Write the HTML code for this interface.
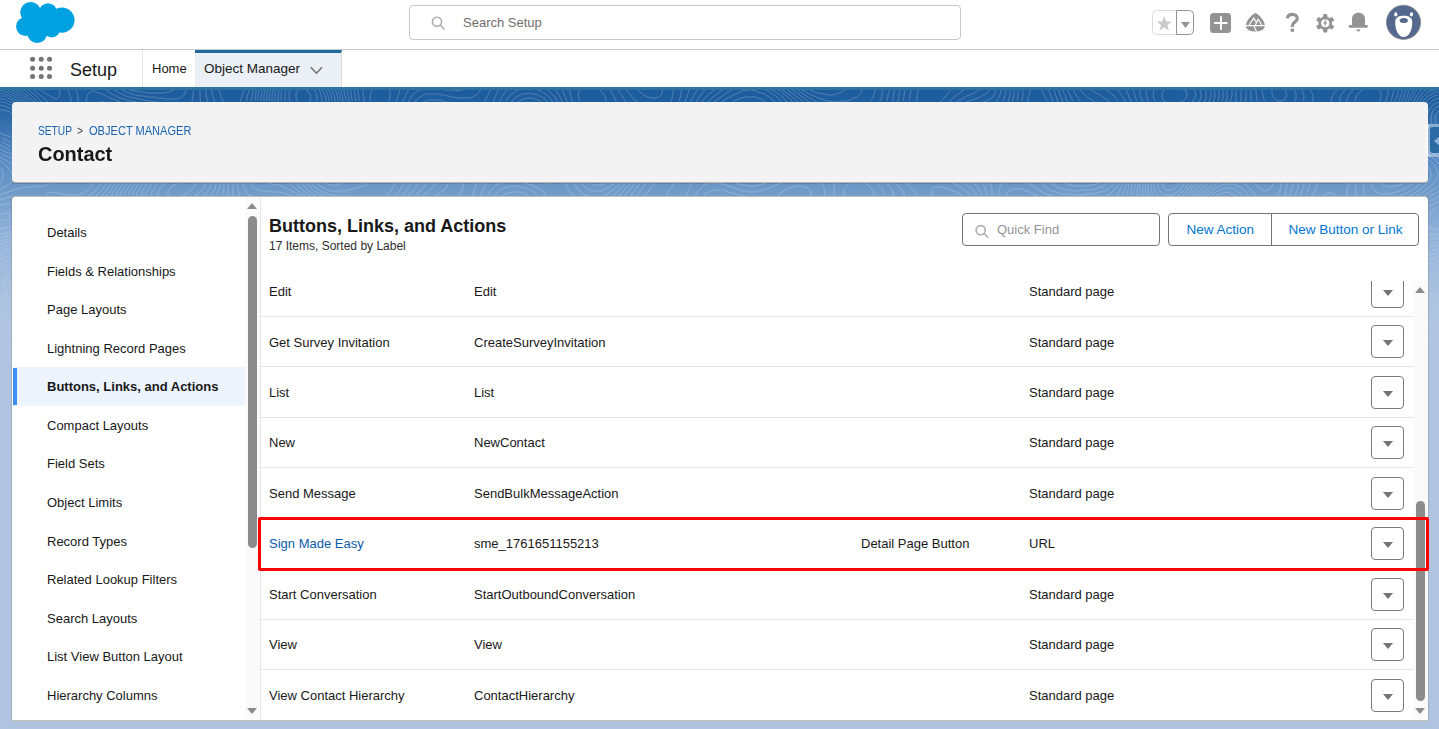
<!DOCTYPE html><html><head><meta charset='utf-8'><style>
*{box-sizing:border-box;margin:0;padding:0}
html,body{width:1439px;height:729px;overflow:hidden;font-family:"Liberation Sans",sans-serif;color:#181818;background:#b0c4df}
.t{position:absolute;line-height:1;white-space:nowrap}
.a{position:absolute}
#hdr{position:absolute;left:0;top:0;width:1439px;height:50px;background:#fff;border-bottom:1px solid #c9c9c9}
#nav{position:absolute;left:0;top:50px;width:1439px;height:37px;background:#fff}
#band{position:absolute;left:0;top:87px;width:1439px;height:642px;background:linear-gradient(#2d74a0 0px,#2d74a0 3px,#1c5c9e 3px,#1f5fa0 15px,#5a8bc3 73px,#6e9ac8 102px,#8fb0d8 143px,#adc3e0 213px,#b0c4df 240px)}
#hcard{position:absolute;left:12px;top:102px;width:1416px;height:81px;background:#f3f3f3;border-radius:4px;border-bottom:1px solid #bcb5af;box-shadow:0 1px 1px rgba(0,0,0,.15)}
#mcard{position:absolute;left:12px;top:196px;width:1416px;height:525px;background:#fff;border-radius:4px 4px 0 0;border-top:1px solid #c4bdb6;border-bottom:1px solid #c4bdb6;box-shadow:-0.5px 0 0 rgba(110,100,90,.45),0.5px 0 0 rgba(110,100,90,.45)}
.sep{position:absolute;left:261px;width:1152px;height:1px;background:#e5e5e5}
.dd{position:absolute;left:1371px;width:33px;height:33px;border:1px solid #7a7a7a;border-radius:4px;background:#fff}
.dd:after{content:"";position:absolute;left:10.5px;top:14px;border-left:5.2px solid transparent;border-right:5.2px solid transparent;border-top:6px solid #747474}
</style></head><body><div id="hdr"></div><div id="nav"></div><div id="band"></div>
<svg class="a" style="left:0;top:90px;-webkit-mask-image:linear-gradient(#000 0px,#000 107px,rgba(0,0,0,.6) 177px,transparent 297px)" width="1439" height="639" viewBox="0 90 1439 639"><path fill="none" stroke="rgba(255,255,255,0.22)" stroke-width="1" d="M1174,189 1176,187 1178,185 1179,183M1163,181 1163,185 1164,188 1166,190 1170,190 1174,189M308,103 310,101 311,97 310,94 308,91 306,90 304,89 300,89 298,90 296,93 296,95 296,98 297,101 299,103M1172,195 1174,194 1176,193 1179,191 1181,189 1182,187 1184,184 1185,181M1158,181 1158,183 1158,187 1159,189 1160,191 1162,193 1165,195 1168,195 1172,195M292,87 290,91 289,93 289,97 290,101 291,103M317,103 317,99 317,95 316,93 314,89 312,87M1174,198 1176,197 1179,195 1181,193 1183,191 1185,189 1186,187 1188,184 1189,181M1155,181 1154,185 1154,189 1156,193 1158,195 1160,197M287,87 286,89 285,93 285,97 285,101M322,103 322,99 321,95 320,92 319,89 317,87M1180,198 1182,196 1184,194 1186,192 1188,189 1190,187 1191,185 1192,183M1151,183 1151,187 1152,191 1152,193 1154,196M179,197 182,196 184,195 187,193 190,191 192,189 194,187 195,185 195,181M181,181 178,182 176,184 174,185 171,187 170,189 168,192 168,195 169,197M176,198 179,197M283,87 282,90 281,93 281,97 281,101M326,103 326,99 325,95 324,93 322,89 321,87M1185,197 1187,195 1189,193 1190,191 1192,188 1194,185 1195,183 1196,181M1148,183 1148,187 1148,191 1150,195 1151,197M194,197 196,195 198,194 200,192 202,190 204,187 205,185 206,181M168,181 165,183 163,185 161,187 160,189 158,193 157,195M280,87 279,91 278,95 278,97 278,100 278,103M329,103 329,99 328,95 327,93 326,89 325,87M1188,197 1190,195 1192,193 1194,190 1196,187 1197,185 1198,183M1146,181 1146,183 1145,187 1146,191 1146,193 1148,197M202,197 204,195 206,193 208,191 210,188 211,185 212,181M160,181 158,183 156,185 155,187 154,189 152,192 151,195M276,87 276,89 275,93 275,97 275,101M332,101 332,99 331,95 330,92 329,89 328,87M600,185 602,185 606,183 608,182 610,181M588,181 591,183 594,185 596,185 600,185M1192,196 1194,194 1196,191 1197,189 1199,187 1200,185 1202,182M1144,181 1143,185 1143,189 1143,193 1144,196M208,198 210,196 212,193 214,191 215,189 216,185 216,183M154,181 152,183 150,186 148,189 147,191 146,194 145,197M12,357 8,358 7,361 7,365 8,367 10,369 13,371M274,87 273,91 272,95 272,99 272,103M335,103 335,99 334,95 333,93 332,89 331,87M542,103 540,101 538,100 535,99 532,98 528,98 524,99 522,100 520,101 517,103M600,191 604,190 606,189 609,187 612,185 614,184 616,182M580,181 582,184 584,186 586,188 588,189 592,191 594,191 598,191 600,191M1194,197 1196,195 1198,192 1200,190 1202,187 1203,185 1205,183 1207,181M1141,181 1140,185 1140,187 1140,191 1140,193 1141,197M215,197 216,195 218,192 219,189 220,186 220,183M149,181 147,183 146,185 144,188 143,191 142,193 140,197M530,197 528,196 526,194 523,193 520,192 516,192 512,192 508,193 506,194 504,195 501,197M0,370 2,372 4,374 6,376 8,378 10,379M12,344 8,345 6,345 2,347 0,349M1440,351 1438,355 1438,359 1439,363 1440,367M271,87 270,91 270,93 269,97 269,101M338,103 338,99 337,95 336,92 335,89 334,87M1032,87 1030,91 1030,93 1028,97 1028,99 1027,103M1047,101 1046,99 1044,95 1043,93 1042,91 1040,88M1273,87 1272,89 1272,93 1272,95 1274,98 1276,100 1278,101 1281,101 1284,100 1286,97 1287,95 1286,92 1284,89 1282,87M1369,87 1366,88 1364,89 1361,91 1359,93 1357,95 1356,97 1355,101M1379,103 1380,100 1381,97 1381,93 1380,91 1378,88M548,103 547,101 545,99 542,97 540,96 538,95 534,94 530,93 526,94 522,94 520,95 516,97 514,99 512,101 511,103M1198,196 1200,193 1202,191 1203,189 1205,187 1207,185 1209,183 1211,181M1138,183 1138,185 1137,189 1137,193 1138,197M602,197 604,196 606,195 609,193 611,191 614,189 616,187 618,185 620,184 622,182M574,183 575,185 576,187 578,190 580,191 582,193 585,195 588,196 590,197M220,197 222,195 223,193 224,189 224,187 224,183M144,181 143,183 142,185 140,188 138,191 137,193 136,196M538,197 536,194 534,192 532,191 528,189 526,188 522,187 520,187 516,186 512,186 508,187 506,187 502,189 500,190 498,192 496,194 494,196M0,377 2,379 5,381 8,383 10,384 12,386M10,335 8,335 4,337 2,337M1440,339 1438,341 1436,343 1434,346 1433,349 1432,353 1432,355 1432,359 1432,361 1433,365 1434,368 1436,371 1437,373 1439,375M137,87 140,87 144,88 148,88 152,88 156,87M268,87 268,89 267,93 267,97 266,101M341,101 340,97 340,95 338,91 338,89M553,103 552,101 550,98 548,96 546,94 544,93 540,91 538,90 534,89 530,89 528,89 524,89 522,89 518,90 516,91 513,93 510,95 509,97 507,99 506,101M813,87 816,88 820,89 824,89 828,88 832,87M1023,87 1023,91 1023,95 1022,99 1022,101M1053,103 1052,99 1051,97 1050,93 1049,91 1048,88M1262,87 1262,91 1263,95 1264,99 1264,101M1294,103 1295,101 1296,99 1296,95 1296,93 1294,89 1293,87M1356,87 1354,89 1352,91 1350,93 1348,97 1347,99 1347,103M1385,103 1386,101 1387,97 1388,94 1388,91 1388,87M1200,197 1202,195 1203,193 1205,191 1207,189 1209,187 1211,185 1213,183 1215,181M1252,181 1254,183 1256,185 1258,187 1261,189 1264,191 1268,190 1270,189 1272,186 1273,183M1136,181 1135,183 1135,187 1134,191 1134,195M612,197 614,195 616,193 618,191 620,189 622,187 624,185 626,183 627,181M566,183 567,187 568,189 570,192 572,194 574,195 576,197M0,383 2,384 4,385 7,387 10,389 12,390M226,197 228,193 228,191 228,187 229,183M140,181 139,183 138,185 136,188 134,191 133,193 132,195M12,323 9,325 6,326 4,327 0,329M547,197 546,195 544,192 542,190 540,189 536,187 534,186 532,185 528,184 525,183 522,182 518,181 514,181M510,181 506,181 502,182 500,183 496,185 494,187 492,189 490,191 489,193 488,195M1440,330 1437,331 1435,333 1433,335 1431,337 1430,339 1429,343 1428,345 1427,349M1428,365 1428,367 1430,371 1431,373 1433,375 1435,377 1437,379 1440,381M124,87 128,89 130,90 134,91 136,91 140,92 144,92 148,93 152,93 156,93 160,93 164,93 168,92 172,91 174,90 176,89M265,87 265,91 264,95 264,97 264,101M343,103 343,99 342,95 342,93 341,89 340,87M511,87 508,89 506,91 505,93 503,95 502,97 500,101 499,103M558,103 556,99 555,97 553,95 551,93 549,91 546,89 544,88 542,87M635,87 637,89 639,91 641,93 644,95 646,96 648,97 652,98 656,98 659,97 661,95 662,93 663,89M803,87 806,88 808,89 812,91 814,92 818,93 820,93 824,94 828,95 832,95 836,94 839,93 842,92 844,90 846,88M1018,87 1018,91 1018,95 1018,97 1017,101M1058,103 1057,99 1056,96 1055,93 1054,90 1053,87M1256,87 1256,91 1256,93 1257,97 1257,101M1133,181 1132,185 1132,187 1131,191 1131,195M1203,197 1205,195 1207,193 1208,191 1210,189 1213,187 1215,185 1218,183 1220,182 1222,181M1240,181 1243,183 1246,185 1248,187 1250,189 1252,191 1253,193 1255,195 1257,197M1276,198 1278,195 1279,193 1280,190 1281,187 1281,183M1303,101 1304,98 1304,95 1303,93 1302,90 1300,87M1348,87 1346,89 1344,91 1343,93 1341,95 1340,99 1340,103M1390,103 1392,99 1392,97 1393,93 1394,90 1395,87M618,197 620,195 622,193 624,190 626,188 628,186 630,183 632,181M554,182 551,183 548,183 546,183 542,182 538,181M489,181 487,183 486,185 484,188 483,191 482,193 480,197M0,387 2,388 4,389 7,391 10,393 12,394M232,198 233,195 233,191 233,187 233,183M135,183 134,185 132,188 130,191 129,193 128,195M12,269 10,271 8,273 7,275 6,277 5,281 4,285 5,289 6,292 7,295 8,299 8,301 8,305 8,307 6,311 4,313 2,315 0,316M1440,317 1438,318 1435,319 1432,320 1430,322 1428,325 1427,327M1428,377 1430,379 1433,381 1436,383 1438,384 1440,386M35,87 38,89 40,90 42,91 45,93 48,95 50,96 52,97 56,99 59,97 60,93 59,89M117,87 120,89 122,90 124,91 128,93 130,93 134,95 136,95 140,96 144,96 148,97 151,97 154,97 158,98 162,98 166,99 168,99 172,99 176,99 178,99 182,97 184,95 185,93 186,90 187,87M263,87 262,91 262,93 261,97 261,101M346,101 346,99 345,95 344,91 344,89M501,87 499,89 498,91 496,95 495,97 494,100 493,103M476,183 476,185 475,189 474,191 473,195 472,197M624,197 626,194 628,192 630,189 632,187 634,185 635,183 637,181M563,103 562,101 560,97 559,95 558,93 556,91 554,89 552,87M625,87 626,89 628,92 630,94 632,97 634,99 636,101 638,102M670,103 672,99 672,97 673,93 673,89M797,87 800,88 802,90 805,91 808,93 810,94 812,95 816,97 818,98 822,99 824,100 828,101 830,101 834,102 838,102 842,101 846,101 848,101 852,99 854,98 857,97 859,95 861,93 862,90 863,87M1014,87 1014,91 1014,95 1013,99 1012,103M1063,103 1062,100 1061,97 1060,95 1059,91 1058,89M1250,87 1251,91 1251,95 1251,99 1251,103M1130,183 1129,185 1128,189 1128,191 1127,195M1206,197 1208,195 1210,193 1212,191 1215,189 1218,187 1220,186 1222,185 1226,184 1230,184 1234,184 1236,185 1240,187 1242,188 1244,190 1246,192 1248,195 1249,197M1284,197 1285,195 1286,191 1286,189 1287,185 1288,181M1312,102 1313,99 1313,95 1312,93 1310,90 1308,88M1341,87 1338,89 1336,91 1334,93 1333,95 1332,97 1331,101 1332,103M1394,103 1396,99 1397,97 1398,93 1398,91 1399,87M240,197 239,193 238,189 238,187 237,183M131,183 130,185 128,188 126,191 125,193 124,195 122,198M11,263 8,265 6,266 4,268 2,269M1440,272 1438,274 1436,275 1432,277 1430,278M1427,383 1430,384 1432,386 1435,387 1438,389 1440,390M0,391 2,392 5,393 8,395 10,396 12,397M29,87 32,89 34,90 36,92 38,94 40,95 42,97 45,99 47,101 49,103M71,103 71,99 70,96 69,93 68,89 67,87M110,87 112,89 114,90 116,91 119,93 122,94 124,95 128,97 130,97 134,98 138,99 140,99 144,100 148,101 151,101 154,102 158,102 160,103M192,103 192,101 193,97 193,93 194,89M260,87 259,91 258,95 258,99 258,101M349,103 349,99 348,95 348,93 347,89 346,87M492,87 490,91 489,93 488,95 486,99 485,101 484,103M450,103 446,102 444,101 440,100 436,100 432,100 428,100 426,101 422,103M463,183 463,187 462,190 461,193 460,195 458,197M282,197 278,197 274,197 270,197 266,198 262,198 258,198 254,197 252,196 249,195 247,193 246,191 244,187 243,185 242,181M128,181 127,183 126,185 124,188 122,191 121,193 120,195 118,198M10,259 8,260 6,261 2,263 0,264M616,87 618,90 620,93 622,95 623,97 624,99 626,102M568,103 566,99 565,97 564,94 563,91 562,89M630,197 632,194 634,191 636,189 637,187 639,185 640,183M679,101 680,98 681,95 681,91 682,87M792,87 796,89 798,90 800,92 802,93 805,95 808,97 810,98 812,99 815,101 818,103M870,101 872,99 873,97 874,94 875,91 875,87M1010,87 1010,91 1010,95 1009,99 1008,102M1068,103 1066,99 1066,97 1064,93 1063,91 1062,87M1245,87 1246,91 1246,95 1246,99 1245,103M1128,181 1126,185 1125,187 1124,191 1123,193 1123,197M1210,197 1212,195 1214,193 1216,192 1218,191 1222,189 1224,188 1228,188 1232,188 1234,189 1237,191 1240,193 1242,195 1243,197M1289,197 1290,195 1291,191 1292,188 1293,185 1293,181M1398,103 1400,99 1400,97 1402,93 1402,91 1404,87M1330,87 1328,88 1324,89 1320,88 1317,87M1400,185 1402,184 1404,183 1407,181M1380,181 1382,184 1384,185 1388,187 1392,187 1396,186 1400,185M1440,265 1436,267 1434,268 1431,269 1428,270M1428,389 1430,389 1434,391 1436,391 1440,393M0,394 2,395 6,397 8,398 10,399M24,87 27,89 30,91 32,93 34,94 36,96 38,98 40,100 42,102M78,103 78,99 78,97 77,93 76,89 76,87M102,87 105,89 108,91 110,93 112,94 114,95 118,97 120,98 124,99 126,100 130,101 132,101 136,102 140,103M124,181 123,183 122,185 120,188 118,191 117,193 116,195 114,197M10,255 8,256 5,257 2,258 0,259M482,87 481,89 480,91 478,93 476,95 472,97 470,98 466,98 462,98 458,98 454,97 452,97 448,96 444,95 442,95 438,94 434,94 430,94 426,94 424,95 420,97 418,99 416,100 414,103M449,181 448,184 447,187 445,189 442,191 440,193 438,194 436,195 433,197M294,197 292,196 290,195 286,194 284,193 280,192 276,192 272,192 268,191 264,191 262,191 258,190 256,189 253,187 251,185 250,183M201,103 200,99 200,95 200,93 200,89M257,87 256,91 256,93 255,97 255,101M352,101 352,99 351,95 351,91 350,89M608,87 609,89 611,91 612,93 614,96 615,99 616,101M573,103 572,100 571,97 570,93 570,91 569,87M636,197 637,195 639,193 640,191 642,189 644,186 646,184 648,181M685,103 686,99 687,97 688,93 689,91 690,87M787,87 790,89 792,90 794,91 797,93 800,95 802,97 804,98 806,100 808,101 810,103M880,101 881,99 882,95 882,93 883,89M1006,87 1006,91 1005,95 1004,99 1003,101M1073,101 1072,99 1070,95 1069,93 1068,91 1067,87M1240,87 1241,91 1241,95 1241,99 1240,102M1124,182 1122,185 1121,187 1120,190 1118,193 1117,195 1116,197M1040,197 1038,196 1035,195 1032,193 1030,192 1027,191 1024,190 1021,189 1018,189 1014,189 1012,189 1009,191 1007,193 1006,196M1440,260 1438,261 1434,263 1432,263 1428,264M1294,197 1296,193 1297,191 1298,187 1298,185 1299,181M1402,103 1402,101 1404,97 1404,95 1406,91 1407,89M1393,193 1396,192 1400,191 1402,190 1405,189 1408,187 1410,186 1412,184 1414,182M1371,181 1372,185 1372,187 1374,190 1376,192 1378,193 1382,194 1386,194 1390,194 1393,193M1215,197 1218,195 1220,194 1223,193 1226,192 1230,193 1232,194 1235,195 1237,197M1430,394 1434,394 1436,395 1440,396M0,397 4,399 6,400 8,401 12,403M20,87 22,88 24,90 26,91 28,93 31,95 33,97 35,99 37,101 39,103M86,103 86,101 87,97 88,94 90,92 94,91 98,93 100,93 104,95 106,96 108,97 112,99 114,99 118,101 120,102 124,103M120,181 119,183 118,185 116,188 114,191 113,193 112,195 110,197M11,251 8,252 6,253 2,254 0,255M254,87 253,91 252,95 252,97 251,101M208,103 207,99 206,95 206,92 206,89M471,87 468,88 466,89 462,90 458,91 454,90 450,90 446,90 442,89 440,89 436,88 432,88 428,88 424,88 422,89 418,91 416,92 414,94 412,96 410,99 409,101 408,103M437,181 436,184 434,186 432,188 430,190 428,192 426,193 424,195 422,197M302,197 300,196 298,195 295,193 292,191 290,190 287,189 284,187 282,186 278,185 276,185 272,184 269,183 266,182 262,181M356,101 355,97 355,93 354,90 353,87M596,87 599,89 601,91 603,93 604,95 606,99 606,101M580,101 579,99 578,95 579,91 580,88M644,197 646,194 648,192 650,189 652,187 654,185 655,183 657,181M690,103 692,99 693,97 694,95 696,92 698,89 699,87M783,87 786,89 788,90 790,92 792,93 795,95 797,97 800,99 802,101 804,103M887,101 888,97 888,95 889,91 890,87M1001,87 1001,91 1000,95 999,97 998,100 996,102M1080,101 1079,99 1077,97 1076,95 1074,92 1073,89 1072,87M1235,87 1236,90 1236,93 1236,97 1236,99 1235,103M1121,181 1120,183 1118,185 1116,188 1114,190 1112,192 1110,194 1108,195 1104,197 1102,197 1098,198M1066,198 1062,198 1058,197 1056,197 1052,196 1049,195 1046,194 1044,193 1040,191 1038,190 1036,188 1034,187 1031,185 1028,183 1026,182M1004,181 1002,183 1001,185 1000,187 999,191 999,195M1440,256 1437,257 1434,258 1431,259 1428,260M1300,197 1300,195 1302,191 1303,189 1304,185 1304,182M1364,181 1364,183 1363,187 1364,191 1364,193 1366,197M1396,197 1398,197 1402,195 1404,194 1407,193 1410,191 1412,190 1414,189 1416,187 1419,185 1421,183 1422,181M1405,103 1406,99 1407,97 1408,94 1409,91 1410,89M1224,197 1228,198M1430,397 1434,398 1438,399 1440,399M0,400 2,401 6,403 8,404 10,405M16,87 18,88 20,90 22,91 24,93 27,95 29,97 31,99 34,101 36,103M97,103 100,102 104,102 108,103M115,183 114,185 112,188 110,191 109,193 107,195 106,197M12,247 8,249 6,249 2,251 0,251M250,87 249,91 248,94 247,97 247,101M215,103 214,99 213,97 212,93 212,91 211,87M411,87 409,89 408,91 406,94 405,97 404,99 402,103M428,181 427,183 425,185 424,187 422,189 420,191 418,193 416,195 414,197M307,197 304,195 302,194 300,192 298,191 296,189 293,187 291,185 289,183 287,181M359,101 359,97 358,93 358,89 358,87M666,195 667,193 669,191 670,189 672,187 674,184 676,182M696,103 698,99 699,97 701,95 702,93 704,91 707,89 709,87M778,87 780,88 782,90 784,91 787,93 790,95 792,97 794,98 796,100 798,103M893,101 893,97 894,94 894,91 895,87M997,87 996,90 995,93 994,95 992,98 990,99 986,101 984,102 980,103M990,182 991,185 992,189 992,191 992,195M1231,87 1232,91 1232,95 1231,99 1230,103M1116,181 1115,183 1113,185 1110,187 1108,189 1106,190 1104,191 1100,192 1097,193 1094,194 1090,194 1086,194 1082,195 1078,195 1074,195 1070,194 1066,194 1062,194 1059,193 1056,192 1052,191 1050,190 1048,189 1045,187 1043,185 1041,183 1039,181M1096,103 1094,102 1092,100 1090,99 1087,97 1085,95 1083,93 1081,91 1080,89M1440,252 1437,253 1434,254 1430,255 1428,256M1306,195 1307,193 1308,190 1309,187 1310,183 1310,181M1357,181 1356,185 1356,187 1355,191 1356,195 1356,198M1408,197 1410,196 1412,195 1415,193 1418,191 1420,189 1422,188 1424,186 1426,184 1428,182 1430,179 1431,177 1431,173 1430,169 1429,167 1428,165M1408,102 1409,99 1410,97 1412,93 1413,91 1414,89M874,197 874,193 872,189 870,187 868,186 866,184 863,183 860,182 856,182 852,183 850,183 848,185 846,187 844,191 844,193 843,197M1430,401 1434,401 1438,402M0,403 4,405 6,405 9,407 12,409M11,87 14,88 16,90 18,91 21,93 23,95 26,97 28,99 30,101 32,103M111,183 110,185 108,188 106,191 104,193 103,195 101,197M12,244 10,245 6,246 3,247 0,248M245,87 244,90 243,93 242,96 241,99 240,103M224,103 222,99 221,97 220,93 219,91 218,87M400,87 400,89 399,93 398,97 397,99 396,103M420,181 418,184 416,187 414,189 413,191 411,193 409,195 408,197M312,197 310,196 308,194 306,193 304,191 302,189 299,187 298,185 296,183M364,103 364,99 363,95 363,91 363,87M773,87 776,89 778,90 780,91 782,93 785,95 788,97 790,99 792,101 793,103M702,102 704,99 706,97 708,95 710,93 712,92 714,90 716,88 718,87M991,87 990,89 988,92 986,94 984,95 980,97 978,98 974,99 972,100 969,101 966,102M980,181 982,183 984,186 985,189 986,191 987,195M884,195 884,193 882,189 881,187 879,185 877,183 875,181M835,183 834,187 834,191 834,193 834,197M686,196 687,193 688,191 690,187 691,185 693,183 695,181M732,181 736,183 738,184 742,185 744,185 748,186 752,186 756,186 759,185 762,184 766,183 768,182 771,181M898,103 898,101 899,97 899,93 900,90 900,87M1226,87 1227,91 1227,95 1227,99 1226,102M1110,182 1108,183 1105,185 1102,187 1100,187 1096,189 1094,189 1090,190 1086,190 1082,190 1078,191 1074,191 1070,190 1066,190 1063,189 1060,188 1057,187 1054,185 1052,184 1050,182M1110,103 1108,101 1106,99 1103,97 1100,95 1098,94 1096,93 1093,91 1090,89 1088,87M1440,249 1438,249 1434,250 1431,251 1428,252M1415,197 1418,195 1420,194 1422,193 1425,191 1427,189 1430,187 1432,185 1434,183 1436,181 1437,179 1438,175 1437,171 1436,168 1434,165 1432,163 1430,161 1428,159M1411,101 1412,99 1414,95 1415,93 1416,91 1418,89M1312,196 1314,193 1315,191 1316,189 1317,185 1318,181M1349,183 1348,186 1347,189 1347,193 1347,197M1429,405 1432,404 1436,404 1439,405M0,406 3,407 6,408M7,87 10,89 12,90 14,91 17,93 20,95 22,97 24,98 26,100 28,102M106,183 105,185 104,187 102,190 100,192 98,194 96,196 94,198M13,241 10,242 6,243 4,244 0,245M235,87 232,88 229,87M388,87 389,89 390,93 390,95 390,97 389,101M412,181 411,183 410,185 408,188 406,191 405,193 403,195 401,197M318,197 316,196 314,195 312,193 309,191 307,189 305,187 303,185 302,183M370,101 370,97 371,93 372,89 373,87M766,87 770,89 772,90 774,91 777,93 780,95 782,97 784,98 786,101 788,103M708,102 710,100 712,98 714,96 716,95 718,93 721,91 724,89 726,87M983,87 981,89 978,91 976,92 974,93 970,95 968,95 965,97 962,99 960,100 958,101 956,103M972,182 974,184 976,185 978,188 980,191 981,193 982,195M894,197 894,195 892,191 891,189 890,187 888,185 886,183M903,101 904,97 904,95 905,91 906,87M1222,87 1223,91 1223,95 1223,99 1222,101M1102,182 1099,183 1096,184 1092,185 1090,185 1086,186 1082,186 1078,186 1074,186 1070,185 1068,185 1064,183 1062,182M1118,101 1116,99 1115,97 1113,95 1110,93 1108,91 1106,90 1104,88M1440,165 1438,163 1436,161 1434,159 1432,157 1429,155M1413,103 1414,101 1416,97 1417,95 1419,93 1420,91 1422,89 1424,87M0,183 2,180 3,177 3,173 2,170 0,167M695,197 696,194 698,191 700,189 702,187 704,185 706,184 710,183 712,183 716,183 718,183 722,184 726,185 728,186 731,187 734,188 737,189 740,190 744,191 746,191 750,192 754,192 758,191 761,191 764,190 767,189 770,188 772,187 776,185 778,184 781,183 784,182 787,181M820,182 822,184 824,187 824,189 825,193 824,197M1440,245 1436,246 1432,247 1430,247M1422,197 1424,196 1426,195 1428,193 1431,191 1434,189 1436,188 1438,186 1440,185M1321,197 1324,195 1326,194 1328,193 1332,193 1334,194 1336,197M1428,409 1430,408 1434,407 1438,408M0,87 4,88 6,89 9,91 12,92 14,94 16,95 19,97 21,99 24,101 26,103M100,183 100,185 98,188 96,190 94,192 92,194 90,195 87,197M12,238 9,239 6,240 2,241 0,241M758,87 760,88 763,89 766,90 768,91 771,93 774,95 776,96 778,98 780,100 782,103M714,102 716,101 718,99 721,97 724,95 726,93 728,92 730,91 733,89 736,87M970,87 966,89 964,90 962,91 960,93 957,95 954,97 952,99 950,101 948,103M962,182 964,183 967,185 970,187 972,189 974,191 975,193 976,195M905,197 904,194 902,191 901,189 899,187 897,185 895,183 893,181M909,101 910,97 910,95 911,91 912,87M1218,87 1218,89 1219,93 1219,97 1218,101 1217,103M1126,103 1125,101 1124,99 1122,96 1120,93 1119,91 1117,89 1115,87M1440,159 1438,158 1436,156 1434,155 1432,153 1429,151 1427,149M1416,103 1418,99 1419,97 1421,95 1422,93 1424,91 1427,89 1430,88M326,197 324,196 321,195 318,193 316,192 314,191 312,189 310,187 308,185 306,182M405,181 404,183 402,187 401,189 399,191 398,193 396,195 394,198M0,190 2,188 5,187 8,185 10,183 12,181 13,179 13,175 12,173 10,170 8,168 6,166 4,164 2,162 0,161M778,196 780,194 782,192 784,191 787,189 790,188 793,187 796,186 800,186 804,187 806,187 809,189 811,191 811,195 810,197M704,196 706,194 708,192 710,191 714,190 718,190 722,190 726,191 728,192 732,193 734,193 738,195 740,195 744,196 746,197M1440,242 1436,243 1433,243 1430,244M1429,197 1432,195 1434,194 1436,193 1440,191M954,87 952,89 950,91 948,93 947,95 945,97 943,99 941,101 940,103M949,181 952,183 954,184 957,185 960,187 962,188 964,189 966,191 968,193 970,195M916,195 915,193 914,191 912,189 910,187 908,185 905,183 903,181M917,103 917,99 917,95 918,91 918,89M1213,87 1214,89 1215,93 1215,97 1214,100 1213,103M1132,103 1130,99 1129,97 1128,94 1127,91 1126,89M0,90 4,91 6,92 8,93 12,95 14,96 16,98 18,99 21,101 23,103M12,164 10,163 7,161 4,159 2,158 0,156M721,103 723,101 726,99 728,98 730,97 733,95 736,94 738,93 742,91 744,91 748,90 752,90 756,91 758,92 762,93 764,94 766,95 769,97 772,99 774,101 775,103M1440,155 1437,153 1435,151 1432,149 1430,147 1428,146M1419,103 1420,101 1422,98 1424,96 1426,94 1428,92 1430,91 1434,90 1438,89M362,198 358,197 356,197 352,196 348,196 344,196 340,196 336,196 332,195 330,195 326,193 324,193 321,191 318,189 316,188 314,186 312,183 311,181M395,183 394,186 392,189 391,191 389,193 387,195 385,197M0,195 4,193 6,193 10,191 12,191 16,189 18,189 22,188 26,187 28,187 32,187 36,186 40,187 44,186 46,185 49,183 51,181M93,181 92,185 91,187 89,189 87,191 84,193 82,193 78,195 74,195 72,195 69,195 66,195 62,194 58,193 56,193 52,192 48,193 47,195 46,197M11,235 8,236 4,237 2,237M714,198 716,197 720,196 724,197 726,197M1440,238 1436,239 1434,239 1430,239M1430,201 1432,200 1434,199 1437,197 1440,196M1209,87 1210,89 1211,93 1211,97 1210,99 1208,103M1137,101 1136,99 1135,95 1134,92 1133,89M0,93 2,93 6,95 8,95 11,97 14,99 16,100 18,102M12,159 9,157 6,156 4,155 1,153M1440,151 1437,149 1434,147 1432,145 1430,144 1428,142M1422,103 1424,100 1426,98 1428,96 1430,95 1434,93 1436,92 1440,92M731,103 734,101 736,100 739,99 742,98 746,97 748,97 752,97 756,97 758,98 761,99 764,101 766,103M928,182 924,182 920,181M342,191 338,191 334,191 332,191 328,190 326,189 322,187 320,186 318,184 316,181M367,181 366,185 364,186 360,187 358,188 354,189 352,189 348,190 344,191 342,191M932,197 932,195 932,191 932,189 934,187 938,187 940,187 944,188 948,189 950,190 954,191 956,192 958,193 961,195 963,197M0,200 3,199 6,198 10,197 12,197 16,197 20,197 22,197M12,231 10,232 6,233 4,233 0,234M1440,234 1436,234 1432,235 1428,235M1428,207 1430,206 1432,205 1435,203 1438,202 1440,201M1204,87 1206,91 1206,93 1206,97 1206,99 1204,102M1143,103 1142,100 1141,97 1140,93 1140,89M0,96 4,96 6,97 10,99 12,100 14,102 16,103M12,154 9,153 6,152 4,151 1,149M1440,147 1438,146 1436,145 1434,143 1432,141 1430,139 1428,137M1426,103 1427,101 1429,99 1432,97 1434,96 1438,95M336,185 332,185 330,185 326,183 324,181M344,182 342,183 338,185 336,185M0,205 2,205 6,204 10,203M10,227 8,227 4,228 0,229M1440,229 1436,229 1434,229 1430,228 1428,227M1428,215 1430,213 1432,211 1434,210 1436,208 1438,207M1198,87 1200,89 1201,93 1201,97 1200,100 1198,103M1149,103 1148,101 1147,97 1146,93 1147,89M0,99 3,99 6,100 8,101 12,103M10,150 8,149 4,147 2,146 0,145M1440,144 1438,142 1436,141 1434,139 1432,137 1430,135 1428,132M1428,105 1430,103 1432,101 1434,100 1436,99 1440,98M0,215 2,214 5,213 8,213 10,214 10,217 8,219 6,220 2,220M1191,87 1193,89 1195,91 1196,95 1194,99 1193,101 1191,103M1155,101 1154,99 1153,95 1154,91 1155,89 1156,87M0,102 4,102 6,103 10,105 12,106M10,146 8,145 4,143 2,142M1440,140 1438,138 1436,137 1434,135 1432,132 1430,129 1429,127 1428,124 1427,121 1427,117 1428,113 1429,111 1430,108 1432,106 1434,104 1436,103 1440,102M1174,87 1178,87 1182,89 1184,90 1186,91 1187,95 1186,98 1184,100 1182,101 1178,103M1168,103 1166,102 1164,101 1162,97 1162,95 1162,93 1164,90 1166,89 1170,87 1174,87M0,105 4,106 7,107 10,108 12,110M10,142 8,141 4,139 2,138M1440,136 1438,134 1436,132 1434,129 1433,127 1432,125 1431,121 1431,117 1432,113 1433,111 1434,109 1437,107 1440,106M0,110 4,110 7,111 10,112 12,114M11,137 8,136 4,135 2,134 0,132M1440,130 1438,128 1436,125 1436,123 1435,119 1436,115 1437,113 1439,111"/></svg>
<div id="hcard"></div>
<div class="t" style="left:38px;top:124.84px;font-size:12px;font-weight:400;color:#1a63b0;transform:scaleX(0.85);transform-origin:0 0">SETUP</div>
<div class="t" style="left:77.3px;top:124.84px;font-size:12px;font-weight:400;color:#444444;transform:scaleX(0.86);transform-origin:0 0">&gt;</div>
<div class="t" style="left:89.3px;top:124.84px;font-size:12px;font-weight:400;color:#1a63b0;transform:scaleX(0.922);transform-origin:0 0">OBJECT MANAGER</div>
<div class="t" style="left:38px;top:143.22px;font-size:21px;font-weight:700;color:#181818;transform:scaleX(0.95);transform-origin:0 0">Contact</div>
<div id="mcard"></div>
<div class="a" style="left:13px;top:367px;width:232px;height:39px;background:#edf4fe"></div>
<div class="a" style="left:13px;top:368px;width:4px;height:37px;background:#3d8ff8"></div>
<div class="t" style="left:47px;top:226.00px;font-size:13px;font-weight:400;color:#181818;">Details</div>
<div class="t" style="left:47px;top:265.00px;font-size:13px;font-weight:400;color:#181818;">Fields &amp; Relationships</div>
<div class="t" style="left:47px;top:303.00px;font-size:13px;font-weight:400;color:#181818;">Page Layouts</div>
<div class="t" style="left:47px;top:342.00px;font-size:13px;font-weight:400;color:#181818;">Lightning Record Pages</div>
<div class="t" style="left:47px;top:380.00px;font-size:13px;font-weight:700;color:#181818;">Buttons, Links, and Actions</div>
<div class="t" style="left:47px;top:419.00px;font-size:13px;font-weight:400;color:#181818;">Compact Layouts</div>
<div class="t" style="left:47px;top:457.00px;font-size:13px;font-weight:400;color:#181818;">Field Sets</div>
<div class="t" style="left:47px;top:496.00px;font-size:13px;font-weight:400;color:#181818;">Object Limits</div>
<div class="t" style="left:47px;top:535.00px;font-size:13px;font-weight:400;color:#181818;">Record Types</div>
<div class="t" style="left:47px;top:573.00px;font-size:13px;font-weight:400;color:#181818;">Related Lookup Filters</div>
<div class="t" style="left:47px;top:612.00px;font-size:13px;font-weight:400;color:#181818;">Search Layouts</div>
<div class="t" style="left:47px;top:650.00px;font-size:13px;font-weight:400;color:#181818;">List View Button Layout</div>
<div class="t" style="left:47px;top:689.00px;font-size:13px;font-weight:400;color:#181818;">Hierarchy Columns</div>
<div class="a" style="left:245px;top:197px;width:15px;height:522px;background:#fafafa"></div>
<div class="a" style="left:260px;top:197px;width:1px;height:522px;background:#e5e5e5"></div>
<div class="a" style="left:248px;top:216px;width:9px;height:332px;background:#8c8c8c;border-radius:5px"></div>
<div class="a" style="left:247px;top:203px;width:0;height:0;border-left:5.6px solid transparent;border-right:5.6px solid transparent;border-bottom:6px solid #8c8c8c"></div>
<div class="a" style="left:246.8px;top:708px;width:0;height:0;border-left:5.6px solid transparent;border-right:5.6px solid transparent;border-top:6px solid #8c8c8c"></div>
<div class="t" style="left:269px;top:216.76px;font-size:18px;font-weight:700;color:#181818;">Buttons, Links, and Actions</div>
<div class="t" style="left:269px;top:239.84px;font-size:12px;font-weight:400;color:#2e2e2e;">17 Items, Sorted by Label</div>
<div class="a" style="left:962px;top:213px;width:198px;height:33px;border:1px solid #747474;border-radius:4px;background:#fff"></div>
<div class="t" style="left:997px;top:223.00px;font-size:13px;font-weight:400;color:#939393;">Quick Find</div>
<div class="a" style="left:1168px;top:213px;width:251px;height:33px;border:1px solid #747474;border-radius:4px;background:#fff"></div>
<div class="a" style="left:1271px;top:213px;width:1px;height:33px;background:#747474"></div>
<div class="t" style="left:1186.5px;top:222.57px;font-size:13.5px;font-weight:400;color:#0176d3;">New Action</div>
<div class="t" style="left:1288.5px;top:222.57px;font-size:13.5px;font-weight:400;color:#0176d3;">New Button or Link</div>
<div class="a" style="left:261px;top:281px;width:1167px;height:438px;overflow:hidden">
<div class="t" style="left:8px;top:4.00px;font-size:13px;font-weight:400;color:#181818;">Edit</div>
<div class="t" style="left:213px;top:4.00px;font-size:13px;font-weight:400;color:#181818;">Edit</div>
<div class="t" style="left:768px;top:4.00px;font-size:13px;font-weight:400;color:#181818;">Standard page</div>
<div class="dd" style="left:1110px;top:-6px"></div>
<div class="sep" style="left:0;top:35.0px"></div>
<div class="t" style="left:8px;top:55.00px;font-size:13px;font-weight:400;color:#181818;">Get Survey Invitation</div>
<div class="t" style="left:213px;top:55.00px;font-size:13px;font-weight:400;color:#181818;">CreateSurveyInvitation</div>
<div class="t" style="left:768px;top:55.00px;font-size:13px;font-weight:400;color:#181818;">Standard page</div>
<div class="dd" style="left:1110px;top:44px"></div>
<div class="sep" style="left:0;top:85.0px"></div>
<div class="t" style="left:8px;top:105.00px;font-size:13px;font-weight:400;color:#181818;">List</div>
<div class="t" style="left:213px;top:105.00px;font-size:13px;font-weight:400;color:#181818;">List</div>
<div class="t" style="left:768px;top:105.00px;font-size:13px;font-weight:400;color:#181818;">Standard page</div>
<div class="dd" style="left:1110px;top:95px"></div>
<div class="sep" style="left:0;top:136.0px"></div>
<div class="t" style="left:8px;top:155.00px;font-size:13px;font-weight:400;color:#181818;">New</div>
<div class="t" style="left:213px;top:155.00px;font-size:13px;font-weight:400;color:#181818;">NewContact</div>
<div class="t" style="left:768px;top:155.00px;font-size:13px;font-weight:400;color:#181818;">Standard page</div>
<div class="dd" style="left:1110px;top:145px"></div>
<div class="sep" style="left:0;top:186.0px"></div>
<div class="t" style="left:8px;top:206.00px;font-size:13px;font-weight:400;color:#181818;">Send Message</div>
<div class="t" style="left:213px;top:206.00px;font-size:13px;font-weight:400;color:#181818;">SendBulkMessageAction</div>
<div class="t" style="left:768px;top:206.00px;font-size:13px;font-weight:400;color:#181818;">Standard page</div>
<div class="dd" style="left:1110px;top:196px"></div>
<div class="sep" style="left:0;top:237.0px"></div>
<div class="t" style="left:8px;top:256.00px;font-size:13px;font-weight:400;color:#0b5cab;">Sign Made Easy</div>
<div class="t" style="left:213px;top:256.00px;font-size:13px;font-weight:400;color:#181818;">sme_1761651155213</div>
<div class="t" style="left:600px;top:256.00px;font-size:13px;font-weight:400;color:#181818;">Detail Page Button</div>
<div class="t" style="left:768px;top:256.00px;font-size:13px;font-weight:400;color:#181818;">URL</div>
<div class="dd" style="left:1110px;top:246px"></div>
<div class="sep" style="left:0;top:287.0px"></div>
<div class="t" style="left:8px;top:307.00px;font-size:13px;font-weight:400;color:#181818;">Start Conversation</div>
<div class="t" style="left:213px;top:307.00px;font-size:13px;font-weight:400;color:#181818;">StartOutboundConversation</div>
<div class="t" style="left:768px;top:307.00px;font-size:13px;font-weight:400;color:#181818;">Standard page</div>
<div class="dd" style="left:1110px;top:297px"></div>
<div class="sep" style="left:0;top:338.0px"></div>
<div class="t" style="left:8px;top:357.00px;font-size:13px;font-weight:400;color:#181818;">View</div>
<div class="t" style="left:213px;top:357.00px;font-size:13px;font-weight:400;color:#181818;">View</div>
<div class="t" style="left:768px;top:357.00px;font-size:13px;font-weight:400;color:#181818;">Standard page</div>
<div class="dd" style="left:1110px;top:347px"></div>
<div class="sep" style="left:0;top:388.0px"></div>
<div class="t" style="left:8px;top:408.00px;font-size:13px;font-weight:400;color:#181818;">View Contact Hierarchy</div>
<div class="t" style="left:213px;top:408.00px;font-size:13px;font-weight:400;color:#181818;">ContactHierarchy</div>
<div class="t" style="left:768px;top:408.00px;font-size:13px;font-weight:400;color:#181818;">Standard page</div>
<div class="dd" style="left:1110px;top:398px"></div>
</div>
<div class="a" style="left:1413px;top:281px;width:15px;height:438px;background:#fafafa"></div>
<div class="a" style="left:1416px;top:501px;width:9px;height:200px;background:#8c8c8c;border-radius:5px"></div>
<div class="a" style="left:1415px;top:287px;width:0;height:0;border-left:5.5px solid transparent;border-right:5.5px solid transparent;border-bottom:6px solid #8c8c8c"></div>
<div class="a" style="left:1415px;top:708px;width:0;height:0;border-left:5.5px solid transparent;border-right:5.5px solid transparent;border-top:6px solid #8c8c8c"></div>
<div class="a" style="left:258px;top:517px;width:1171px;height:54px;border:3px solid #ff0000;border-radius:2px"></div>
<div class="a" style="left:1425.5px;top:123.5px;width:20px;height:33px;border-radius:5px;background:rgba(225,235,245,0.45);border-left:2px solid #fff"></div>
<div class="a" style="left:1430px;top:127px;width:14px;height:26px;border-radius:3px;background:#2c6aa3"></div>
<div class="a" style="left:1434px;top:135.5px;width:0;height:0;border-top:5px solid transparent;border-bottom:5px solid transparent;border-right:6px solid #8fb0d6"></div>
<div class="a" style="left:409px;top:5px;width:552px;height:35px;border:1px solid #c9c9c9;border-radius:4px;background:#fff"></div>
<div class="t" style="left:463px;top:16.00px;font-size:13px;font-weight:400;color:#706e6b;">Search Setup</div>
<div class="t" style="left:70px;top:60.76px;font-size:18px;font-weight:400;color:#181818;">Setup</div>
<div class="a" style="left:142px;top:50px;width:1px;height:37px;background:#e5e5e5"></div>
<div class="t" style="left:152px;top:62.00px;font-size:13px;font-weight:400;color:#181818;">Home</div>
<div class="a" style="left:195px;top:50px;width:147px;height:37px;background:#eaf0f5;border-top:3px solid #1f6b9c;border-right:1px solid #dddbda"></div>
<div class="t" style="left:204px;top:61.57px;font-size:13.5px;font-weight:400;color:#181818;">Object Manager</div>
<svg class="a" style="left:0;top:0" width="1439" height="729" viewBox="0 0 1439 729"><g fill="#00a1e0"><circle cx="30.6" cy="12.3" r="10.4"/><circle cx="48" cy="12.2" r="9"/><circle cx="61.9" cy="20.2" r="12.6"/><circle cx="25.7" cy="26.5" r="9.6"/><circle cx="37.2" cy="32.6" r="10.3"/><circle cx="51.7" cy="29" r="8.5"/><rect x="24" y="12" width="34" height="20"/></g><circle cx="32.6" cy="59.3" r="2.5" fill="#747474"/><circle cx="41.2" cy="59.3" r="2.5" fill="#747474"/><circle cx="49.5" cy="59.3" r="2.5" fill="#747474"/><circle cx="32.6" cy="68.2" r="2.5" fill="#747474"/><circle cx="41.2" cy="68.2" r="2.5" fill="#747474"/><circle cx="49.5" cy="68.2" r="2.5" fill="#747474"/><circle cx="32.6" cy="76.5" r="2.5" fill="#747474"/><circle cx="41.2" cy="76.5" r="2.5" fill="#747474"/><circle cx="49.5" cy="76.5" r="2.5" fill="#747474"/><g fill="none" stroke="#aeaeae" stroke-width="1.6" stroke-linecap="round"><circle cx="437" cy="21.8" r="4.6"/><line x1="440.5" y1="25.3" x2="444" y2="29"/></g><g fill="none" stroke="#aeaeae" stroke-width="1.6" stroke-linecap="round"><circle cx="980.7" cy="230.2" r="4.6"/><line x1="984.2" y1="233.7" x2="987.8" y2="237.2"/></g><polyline points="310.8,67.3 316.4,73.2 322,67.3" fill="none" stroke="#747474" stroke-width="1.6"/><path d="M1176.5,10.5 H1156.5 a4,4 0 0 0 -4,4 V30.5 a4,4 0 0 0 4,4 H1176.5" fill="#fff" stroke="#dddbda" stroke-width="1"/><path d="M1176.5,10.5 H1189.5 a4,4 0 0 1 4,4 V30.5 a4,4 0 0 1 -4,4 H1176.5 Z" fill="#fff" stroke="#939393" stroke-width="1"/><polygon points="1164.2,15.8 1166.1,21.4 1171.9,21.5 1167.3,25 1169,30.8 1164.2,27.3 1159.4,30.8 1161.1,25 1156.5,21.5 1162.3,21.4" fill="#c9c9c9"/><polygon points="1181,22 1190,22 1185.5,28" fill="#939393"/><rect x="1210" y="13" width="21" height="20" rx="3.5" fill="#939393"/><rect x="1214" y="22" width="13.5" height="2" fill="#fff"/><rect x="1220" y="16.3" width="2" height="13.5" fill="#fff"/><path d="M1245.8,24.9 C1246.6,20 1251.5,14.8 1255.4,12.9 C1259.3,14.8 1264.1,20 1264.8,24.9 Z" fill="#939393"/><path d="M1245.8,26.2 L1264.8,26.2 C1264.6,29.5 1260,31.6 1255.4,31.6 C1250.8,31.6 1246,29.5 1245.8,26.2 Z" fill="#939393"/><polyline points="1249.2,25 1253.7,18.2 1256.6,22.6" fill="none" stroke="#fff" stroke-width="1.2"/><polyline points="1255.4,25 1258.1,19.3 1261.7,25" fill="none" stroke="#fff" stroke-width="1.2"/><polyline points="1254.2,26 1255.2,28.8 1256.6,31.8" fill="none" stroke="#fff" stroke-width="1.1"/><path d="M1287.4,18.4 C1287.6,15.4 1289.7,14.3 1292.4,14.3 C1295.3,14.3 1297.3,16 1297.3,18.5 C1297.3,21.9 1292.4,22.3 1292.4,25.8 V27" fill="none" stroke="#939393" stroke-width="3.2"/><rect x="1290.7" y="28.6" width="3.3" height="3.2" fill="#939393"/><circle cx="1325.2" cy="23.25" r="6.7" fill="#939393"/><rect x="1323.10" y="13.95" width="4.2" height="5" rx="1" fill="#939393" transform="rotate(0 1325.2 23.25)"/><rect x="1323.10" y="13.95" width="4.2" height="5" rx="1" fill="#939393" transform="rotate(60 1325.2 23.25)"/><rect x="1323.10" y="13.95" width="4.2" height="5" rx="1" fill="#939393" transform="rotate(120 1325.2 23.25)"/><rect x="1323.10" y="13.95" width="4.2" height="5" rx="1" fill="#939393" transform="rotate(180 1325.2 23.25)"/><rect x="1323.10" y="13.95" width="4.2" height="5" rx="1" fill="#939393" transform="rotate(240 1325.2 23.25)"/><rect x="1323.10" y="13.95" width="4.2" height="5" rx="1" fill="#939393" transform="rotate(300 1325.2 23.25)"/><circle cx="1325.2" cy="23.25" r="4.1" fill="#fff"/><polygon points="1325.5,19.8 1323.3,23.7 1325.1,23.7 1324.3,26.8 1327.3,22.5 1325.5,22.5 1326.5,19.8" fill="#939393"/><path d="M1352,25 V19 C1352,15.3 1354.8,12.8 1358.5,12.8 C1362.2,12.8 1365,15.3 1365,19 V25 H1366.5 a1.3,1.3 0 0 1 0,2.8 H1350 a1.3,1.3 0 0 1 0,-2.8 Z" fill="#939393"/><path d="M1356.3,29.4 H1360.5 C1360.2,30.8 1359.4,31.6 1358.4,31.6 C1357.4,31.6 1356.6,30.8 1356.3,29.4 Z" fill="#939393"/><circle cx="1403.5" cy="22.3" r="17.1" fill="#54698d" stroke="#8c8c8c" stroke-width="0.8"/><ellipse cx="1395.8" cy="14.4" rx="1.6" ry="2.1" fill="#fff"/><ellipse cx="1411.5" cy="14.4" rx="1.6" ry="2.1" fill="#fff"/><path d="M1403.7,15.8 C1408.8,15.8 1412.3,17.5 1412.3,22.5 C1412.3,30 1409,37.1 1403.7,37.1 C1398.4,37.1 1395.2,30 1395.2,22.5 C1395.2,17.5 1398.6,15.8 1403.7,15.8 Z" fill="#fff"/><ellipse cx="1403.8" cy="20.5" rx="4.1" ry="2.5" fill="#54698d"/></svg></body></html>
